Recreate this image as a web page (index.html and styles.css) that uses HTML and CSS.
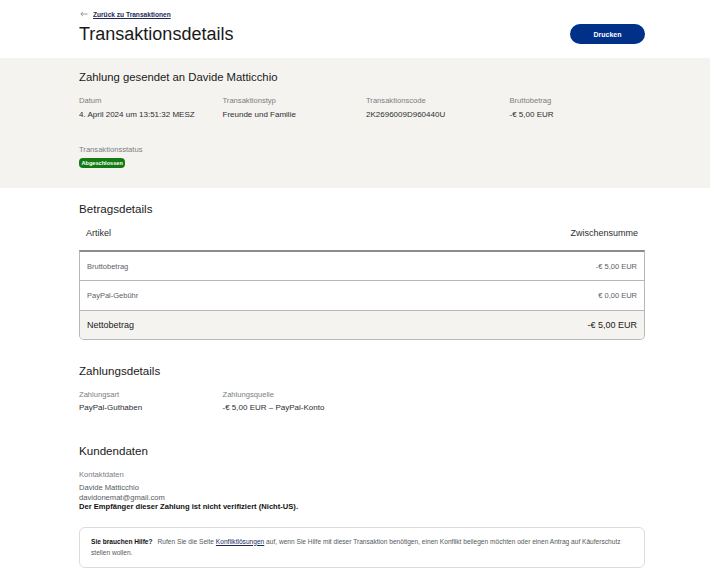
FILE: index.html
```html
<!DOCTYPE html>
<html lang="de">
<head>
<meta charset="utf-8">
<title>Transaktionsdetails</title>
<link rel="stylesheet" href="styles.css">
</head>
<body>
<div class="page">
  <header class="head inner">
    <a class="back" href="#">
      <svg class="back-icon" width="8" height="6" viewBox="0 0 8 6"><path d="M7.5 3H1M3 0.8L0.8 3L3 5.2" fill="none" stroke="#8a8f94" stroke-width="0.9"/></svg>
      <span>Zurück zu Transaktionen</span>
    </a>
    <div class="title-row">
      <h1>Transaktionsdetails</h1>
      <button class="btn">Drucken</button>
    </div>
  </header>

  <section class="band">
    <div class="inner">
      <h2 class="band-title">Zahlung gesendet an Davide Matticchio</h2>
      <div class="grid4">
        <div><div class="lbl">Datum</div><div class="val">4. April 2024 um 13:51:32 MESZ</div></div>
        <div><div class="lbl">Transaktionstyp</div><div class="val">Freunde und Familie</div></div>
        <div><div class="lbl">Transaktionscode</div><div class="val">2K2696009D960440U</div></div>
        <div><div class="lbl">Bruttobetrag</div><div class="val">-€ 5,00 EUR</div></div>
      </div>
      <div class="status">
        <div class="lbl">Transaktionsstatus</div>
        <span class="badge">Abgeschlossen</span>
      </div>
    </div>
  </section>

  <main class="inner">
    <h3 class="sec sec-first">Betragsdetails</h3>
    <div class="thead"><span>Artikel</span><span>Zwischensumme</span></div>
    <div class="table">
      <div class="row"><span>Bruttobetrag</span><span>-€ 5,00 EUR</span></div>
      <div class="row"><span>PayPal-Gebühr</span><span>€ 0,00 EUR</span></div>
      <div class="row total"><span>Nettobetrag</span><span>-€ 5,00 EUR</span></div>
    </div>

    <h3 class="sec sec-pay">Zahlungsdetails</h3>
    <div class="grid2">
      <div><div class="lbl">Zahlungsart</div><div class="val">PayPal-Guthaben</div></div>
      <div><div class="lbl">Zahlungsquelle</div><div class="val">-€ 5,00 EUR – PayPal-Konto</div></div>
    </div>

    <h3 class="sec sec-cust">Kundendaten</h3>
    <div class="lbl">Kontaktdaten</div>
    <div class="contact">
      <div>Davide Matticchio</div>
      <div>davidonemat@gmail.com</div>
      <div class="strong">Der Empfänger dieser Zahlung ist nicht verifiziert (Nicht-US).</div>
    </div>

    <div class="help">
      <div class="help-line"><b>Sie brauchen Hilfe?</b><span class="gap"></span><span>Rufen Sie die Seite </span><a href="#">Konfliktlösungen</a><span>&nbsp;auf, wenn Sie Hilfe mit dieser Transaktion benötigen, einen Konflikt beilegen möchten oder einen Antrag auf Käuferschutz</span></div>
      <div class="help-line">stellen wollen.</div>
    </div>
  </main>
</div>
</body>
</html>
```

FILE: styles.css
```css
* { box-sizing: border-box; margin: 0; padding: 0; }
body {
  margin: 0;
  background: #ffffff;
  font-family: "Liberation Sans", Arial, sans-serif;
  color: #2c2e2f;
}
.inner {
  width: 566px;
  margin-left: 79px;
}
.head { padding-top: 9px; }
.back {
  display: flex;
  align-items: center;
  gap: 5px;
  height: 10px;
  text-decoration: none;
  color: #1c2b5a;
  font-size: 6.6px;
  font-weight: bold;
}
.back-icon { margin-left: 1px; }
.back span { text-decoration: underline; }
.title-row {
  margin-top: 5px;
  height: 20px;
  display: flex;
  justify-content: space-between;
  align-items: center;
}
h1 {
  font-size: 18px;
  font-weight: normal;
  line-height: 20px;
  color: #1a1a1a;
}
.btn {
  width: 75px;
  height: 20px;
  border: none;
  border-radius: 10px;
  background: #003087;
  color: #fff;
  font-family: inherit;
  font-size: 7px;
  font-weight: bold;
}
.band {
  margin-top: 14px;
  height: 130px;
  background: #f5f3ef;
  padding-top: 12px;
}
.band-title, .sec {
  font-size: 11.6px;
  font-weight: normal;
  line-height: 14px;
  color: #1a1a1a;
}
.band-title { font-size: 11.3px; }
.grid4 {
  margin-top: 12px;
  display: grid;
  grid-template-columns: 143.5px 143.5px 143.5px 1fr;
}
.grid2 {
  margin-top: 12px;
  display: grid;
  grid-template-columns: 143.5px 1fr;
}
.lbl {
  font-size: 7.6px;
  line-height: 10px;
  color: #7a7e83;
}
.val {
  margin-top: 4px;
  font-size: 8px;
  line-height: 10px;
  color: #2c2e2f;
}
.grid2 .val { margin-top: 3px; }
.status { margin-top: 25px; }
.badge {
  display: inline-block;
  margin-top: 3px;
  height: 10px;
  line-height: 10px;
  padding: 0 2.5px;
  border-radius: 4px;
  background: #147a14;
  color: #fff;
  font-size: 5.6px;
  font-weight: bold;
  vertical-align: top;
}
.sec-first { margin-top: 14px; }
.thead {
  margin-top: 11px;
  padding: 0 7px;
  display: flex;
  justify-content: space-between;
  font-size: 9px;
  line-height: 12px;
  color: #2c2e2f;
}
.table {
  margin-top: 11px;
  border: 1px solid #b7b7b7;
  border-top: 2px solid #8c8c8c;
  border-radius: 0 0 5px 5px;
  overflow: hidden;
}
.row {
  height: 30px;
  display: flex;
  justify-content: space-between;
  align-items: center;
  padding: 0 7px;
  font-size: 7.5px;
  color: #5d6166;
  border-bottom: 1px solid #b7b7b7;
}
.row:first-child { height: 29px; }
.row.total {
  height: 28px;
  border-bottom: none;
  background: #f5f3ef;
  font-size: 9px;
  color: #1a1a1a;
}
.sec-pay { margin-top: 24px; }
.sec-cust { margin-top: 31px; }
.sec-cust + .lbl { margin-top: 12px; }
.contact {
  margin-top: 3px;
  font-size: 7.6px;
  line-height: 9.5px;
  color: #555a5e;
}
.contact .strong {
  font-weight: bold;
  color: #111;
}
.help {
  margin-top: 15px;
  border: 1px solid #dcdcdc;
  border-radius: 6px;
  padding: 8px 12px 8px 11px;
  height: 41px;
  font-size: 6.6px;
  line-height: 11px;
  color: #555a5e;
}
.help-line { white-space: nowrap; }
.help b { color: #111; }
.help .gap { display: inline-block; width: 5px; }
.help a { color: #1c2b5a; text-decoration: underline; }
```
